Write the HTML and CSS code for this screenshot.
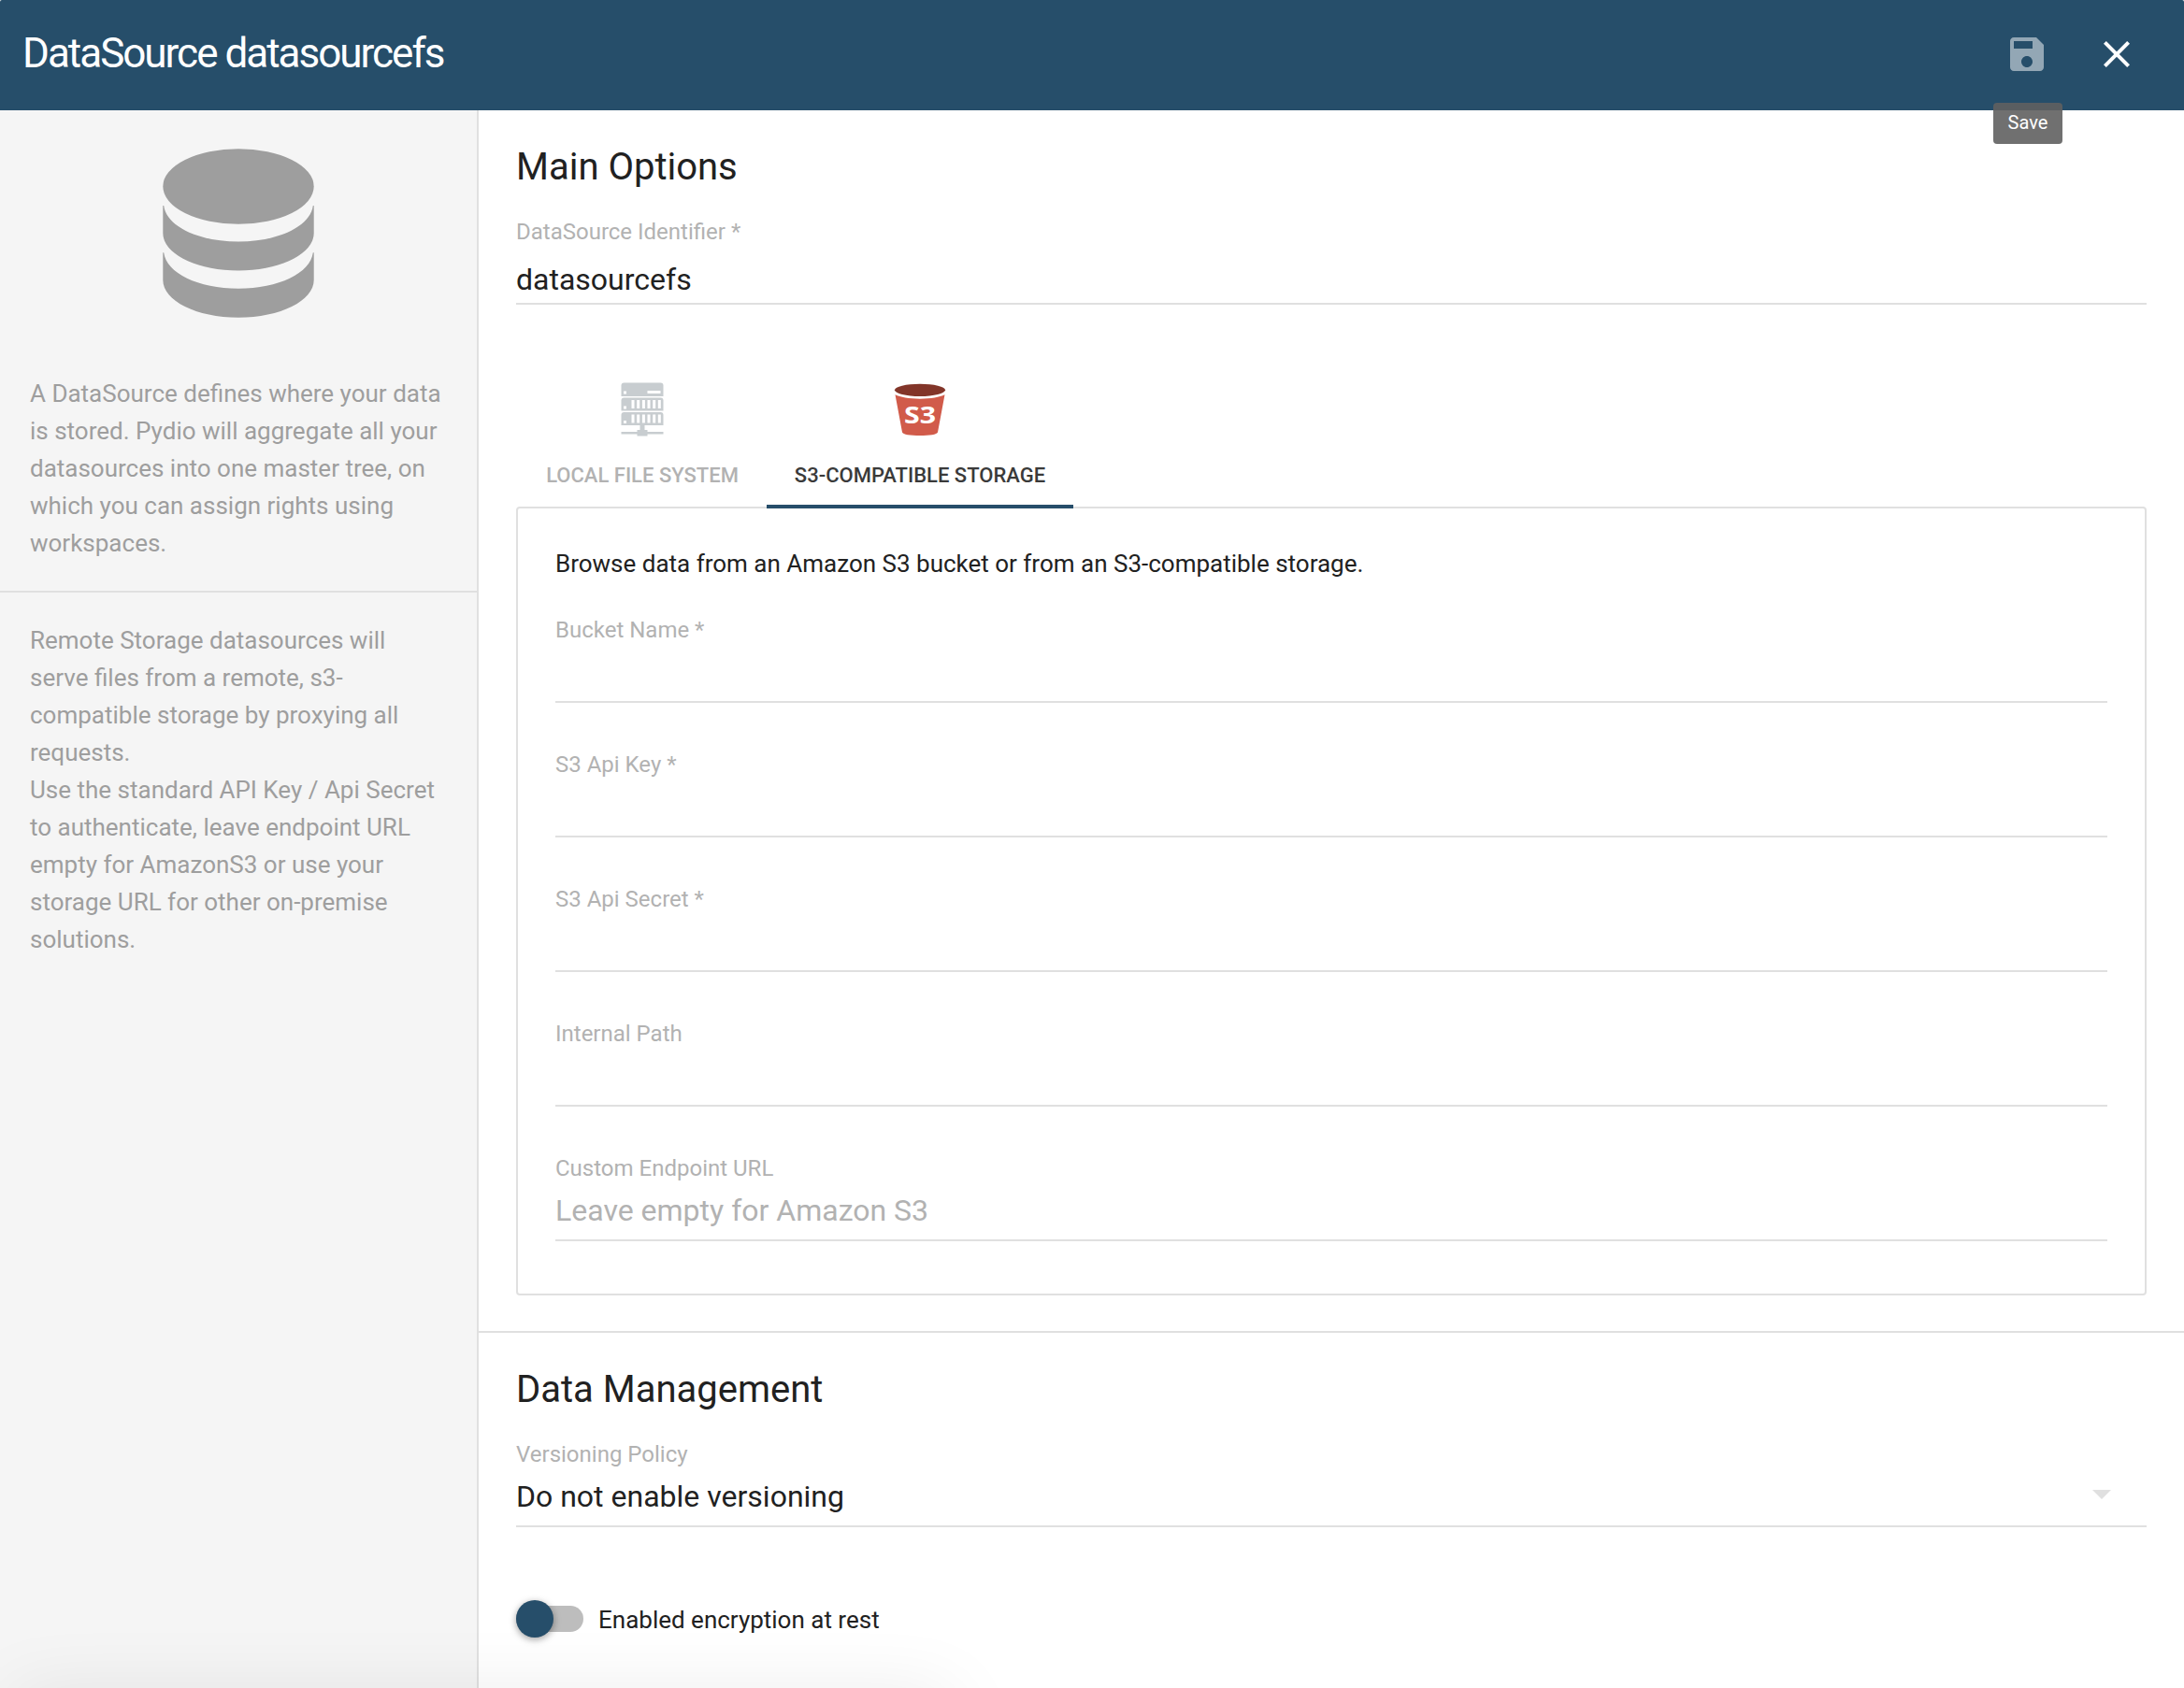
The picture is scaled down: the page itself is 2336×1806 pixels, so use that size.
FILE: index.html
```html
<!DOCTYPE html>
<html lang="en">
<head>
<meta charset="utf-8">
<title>DataSource datasourcefs</title>
<link rel="stylesheet" href="styles.css">
</head>
<body>
<div class="dialog">
  <header class="header">
    <h1 class="title">DataSource datasourcefs</h1>
    <div class="actions">
      <button class="icon-button save" aria-label="Save">
        <svg class="icon faded" viewBox="0 0 24 24"><path d="M17 3H5c-1.11 0-2 .9-2 2v14c0 1.1.89 2 2 2h14c1.1 0 2-.9 2-2V7l-4-4zm-5 16c-1.66 0-3-1.34-3-3s1.34-3 3-3 3 1.34 3 3-1.34 3-3 3zm3-10H5V5h10v4z"/></svg>
        <span class="tooltip">Save</span>
      </button>
      <button class="icon-button" aria-label="Close">
        <svg class="icon" viewBox="0 0 24 24"><path d="M19 6.41L17.59 5 12 10.59 6.41 5 5 6.41 10.59 12 5 17.59 6.41 19 12 13.41 17.59 19 19 17.59 13.41 12z"/></svg>
      </button>
    </div>
  </header>
  <div class="body">
    <aside class="sidebar">
      <div class="help help-first">
        <svg class="database" viewBox="0 0 162 182">
          <ellipse cx="81" cy="40.5" rx="80.7" ry="40.2"/>
          <path d="M.3 61H1.2C4 83 38 99.500 81 99.500S158 83 160.800 61h.9V90.500c0 22-36 40-80.700 40S.3 112.500.3 90.500z"/>
          <path d="M.3 111.300H1.200C4 133.300 38 149.800 81 149.800S158 133.300 160.800 111.300h.9V140.800c0 22-36 40-80.700 40S.3 162.800.3 140.800z"/>
        </svg>
        <p class="help-text">A DataSource defines where your data is stored. Pydio will aggregate all your datasources into one master tree, on which you can assign rights using workspaces.</p>
      </div>
      <div class="help">
        <p class="help-text">Remote Storage datasources will serve files from a remote, s3-compatible storage by proxying all requests.<br>Use the standard API Key / Api Secret to authenticate, leave endpoint URL empty for AmazonS3 or use your storage URL for other on-premise solutions.</p>
      </div>
    </aside>
    <main class="main">
      <section class="section">
        <h2 class="heading">Main Options</h2>
        <label class="field"><span class="label">DataSource Identifier *</span><input class="input" value="datasourcefs"></label>
        <div class="tabs">
          <div class="tab">
            <svg class="tab-icon" viewBox="0.5 0 60 60">
              <g fill="#c8cdd0">
                <path d="M11 1.500h39q3 0 3 3V16H8V4.500q0-3 3-3z"/>
                <path d="M11 17.600h39q3 0 3 3V31.600H8V20.600q0-3 3-3z"/>
                <path d="M11 33h39q3 0 3 3V47H8V36q0-3 3-3z"/>
                <path d="M28 47h5v5h3v2h17v2.500H36V58.500H25V56.500H8V54h17v-2h3z"/>
              </g>
              <g fill="#fff">
                <path d="M10.500 10.500h3v3h-3zM36 10h14v3H36zM10.500 26.500h3v3h-3zM10.500 42h3v3h-3z"/>
                <path d="M19 20h3v9h-3zM24.700 20h3v9h-3zM30.400 20h3v9h-3zM36 20h3v9h-3zM41.700 20h3v9h-3zM47.300 20h3v9h-3z"/>
                <path d="M19 35.500h3v9h-3zM24.700 35.500h3v9h-3zM30.400 35.500h3v9h-3zM36 35.500h3v9h-3zM41.700 35.500h3v9h-3zM47.300 35.500h3v9h-3z"/>
              </g>
            </svg>
            <span class="tab-label">LOCAL FILE SYSTEM</span>
          </div>
          <div class="tab active">
            <svg class="tab-icon" viewBox="0 0 60 60">
              <ellipse cx="30" cy="9.300" rx="27" ry="6.600" fill="#823529"/>
              <path d="M3.500 14.300C9 17 18 18.700 30 18.700S51 17 56.500 14.300L49 54.500C48.400 57 40 58 30 58S11.600 57 11 54.500z" fill="#d15b4a"/>
              <text class="bucket-text" x="30" y="44.500" text-anchor="middle" textLength="34" lengthAdjust="spacingAndGlyphs">S3</text>
            </svg>
            <span class="tab-label">S3-COMPATIBLE STORAGE</span>
          </div>
        </div>
        <div class="panel">
          <p class="intro">Browse data from an Amazon S3 bucket or from an S3-compatible storage.</p>
          <label class="field"><span class="label">Bucket Name *</span><input class="input"></label>
          <label class="field"><span class="label">S3 Api Key *</span><input class="input"></label>
          <label class="field"><span class="label">S3 Api Secret *</span><input class="input"></label>
          <label class="field"><span class="label">Internal Path</span><input class="input"></label>
          <label class="field raised"><span class="label">Custom Endpoint URL</span><input class="input" placeholder="Leave empty for Amazon S3"></label>
        </div>
      </section>
      <section class="section">
        <h2 class="heading">Data Management</h2>
        <div class="field raised">
          <span class="label">Versioning Policy</span>
          <div class="input select"><span>Do not enable versioning</span><svg class="caret" viewBox="0 0 20 10"><path d="M0 0h20L10 10z"/></svg></div>
        </div>
        <div class="toggle-row">
          <span class="track"><span class="thumb"></span></span>
          <span class="toggle-label">Enabled encryption at rest</span>
        </div>
      </section>
    </main>
  </div>
  <div class="bottom-shade"></div>
</div>
</body>
</html>
```
FILE: styles.css
```css
* { box-sizing: border-box; }
body { margin: 0; font-family: Roboto, sans-serif; color: #212121; background: #fff; }
h1, h2, p { margin: 0; font-weight: 400; }
.dialog { position: relative; display: flex; flex-direction: column; height: 1806px; overflow: hidden; }
.header { display: flex; justify-content: space-between; height: 118px; padding: 0 24px; background: #264e6a; border-radius: 2px 2px 0 0; color: #fff; }
.title { font-size: 44px; line-height: 115px; letter-spacing: -2px; }
.actions { display: flex; padding-top: 10px; }
.icon-button { position: relative; width: 96px; height: 96px; padding: 24px; border: 0; background: none; color: #fff; }
.icon { display: block; width: 48px; height: 48px; fill: #fff; }
.faded { opacity: .5; }
.tooltip { position: absolute; left: 12px; top: 100px; z-index: 2; width: 74px; height: 44px; border-radius: 4px; background: rgba(97, 97, 97, .9); font: 20px/42px Roboto, sans-serif; text-align: center; }
.body { display: flex; flex: 1; min-height: 0; }
.sidebar { flex: 0 0 512px; background: #f5f5f5; border-right: 2px solid #e0e0e0; }
.help { padding: 31px 32px; }
.help-first { display: flex; flex-direction: column; align-items: center; padding-top: 41px; border-bottom: 2px solid #e0e0e0; }
.database { width: 162px; height: 182px; margin-bottom: 60px; fill: #9e9e9e; }
.help-text { width: 446px; font-size: 26px; line-height: 40px; color: #9e9e9e; }
.main { flex: 1; min-width: 0; }
.section { padding: 32px 40px 38px; }
.section + .section { border-top: 2px solid #e0e0e0; }
.heading { height: 48px; font-size: 40px; line-height: 58px; }
.field { display: flex; flex-direction: column; height: 144px; padding-top: 36px; }
.label { font-size: 24px; line-height: 28px; color: #b2b2b2; }
.input { height: 62px; margin: 2px 0 16px; padding: 10px 0 0; border: 0; border-bottom: 2px solid #e0e0e0; outline: 0; background: none; font: 32px/46px Roboto, sans-serif; color: #212121; }
.raised .input { padding: 0 0 2px; }
.input::placeholder { color: #b2b2b2; opacity: 1; }
.select { display: flex; justify-content: space-between; line-height: 58px; }
.raised .select { padding: 0 38px 0 0; }
.caret { width: 20px; height: 10px; margin-top: 22px; fill: #e0e0e0; }
.tabs { position: relative; z-index: 1; display: flex; height: 202px; padding-left: 2px; }
.tab { display: flex; flex-direction: column; align-items: center; width: 266px; padding-top: 66px; color: #b2b2b2; border-bottom: 4px solid transparent; }
.tab.active { width: 328px; color: #3a3a3a; border-color: #264e6a; }
.tab-icon { width: 60px; height: 60px; }
.bucket-text { font: 700 25px "Open Sans", sans-serif; fill: #fff; }
.tab-label { margin-top: 27px; font-size: 22px; font-weight: 500; line-height: 28px; white-space: nowrap; }
.panel { height: 844px; margin-top: -2px; padding: 40px; border: 2px solid #e0e0e0; border-radius: 4px; }
.intro { height: 40px; font-size: 26px; line-height: 38px; }
.toggle-row { display: flex; align-items: center; height: 40px; margin-top: 62px; }
.track { width: 72px; height: 28px; border-radius: 14px; background: #bdbdbd; }
.thumb { display: block; width: 40px; height: 40px; margin-top: -6px; border-radius: 50%; background: #264e6a; box-shadow: 0 2px 10px rgba(0, 0, 0, .2), 0 2px 6px rgba(0, 0, 0, .2); }
.toggle-label { margin-left: 16px; font-size: 26px; line-height: 44px; padding-top: 2px; }
.bottom-shade { position: absolute; left: 20px; bottom: -50px; width: 990px; height: 30px; border-radius: 10px; box-shadow: 0 0 80px 10px rgba(0, 0, 0, .1); }
```
